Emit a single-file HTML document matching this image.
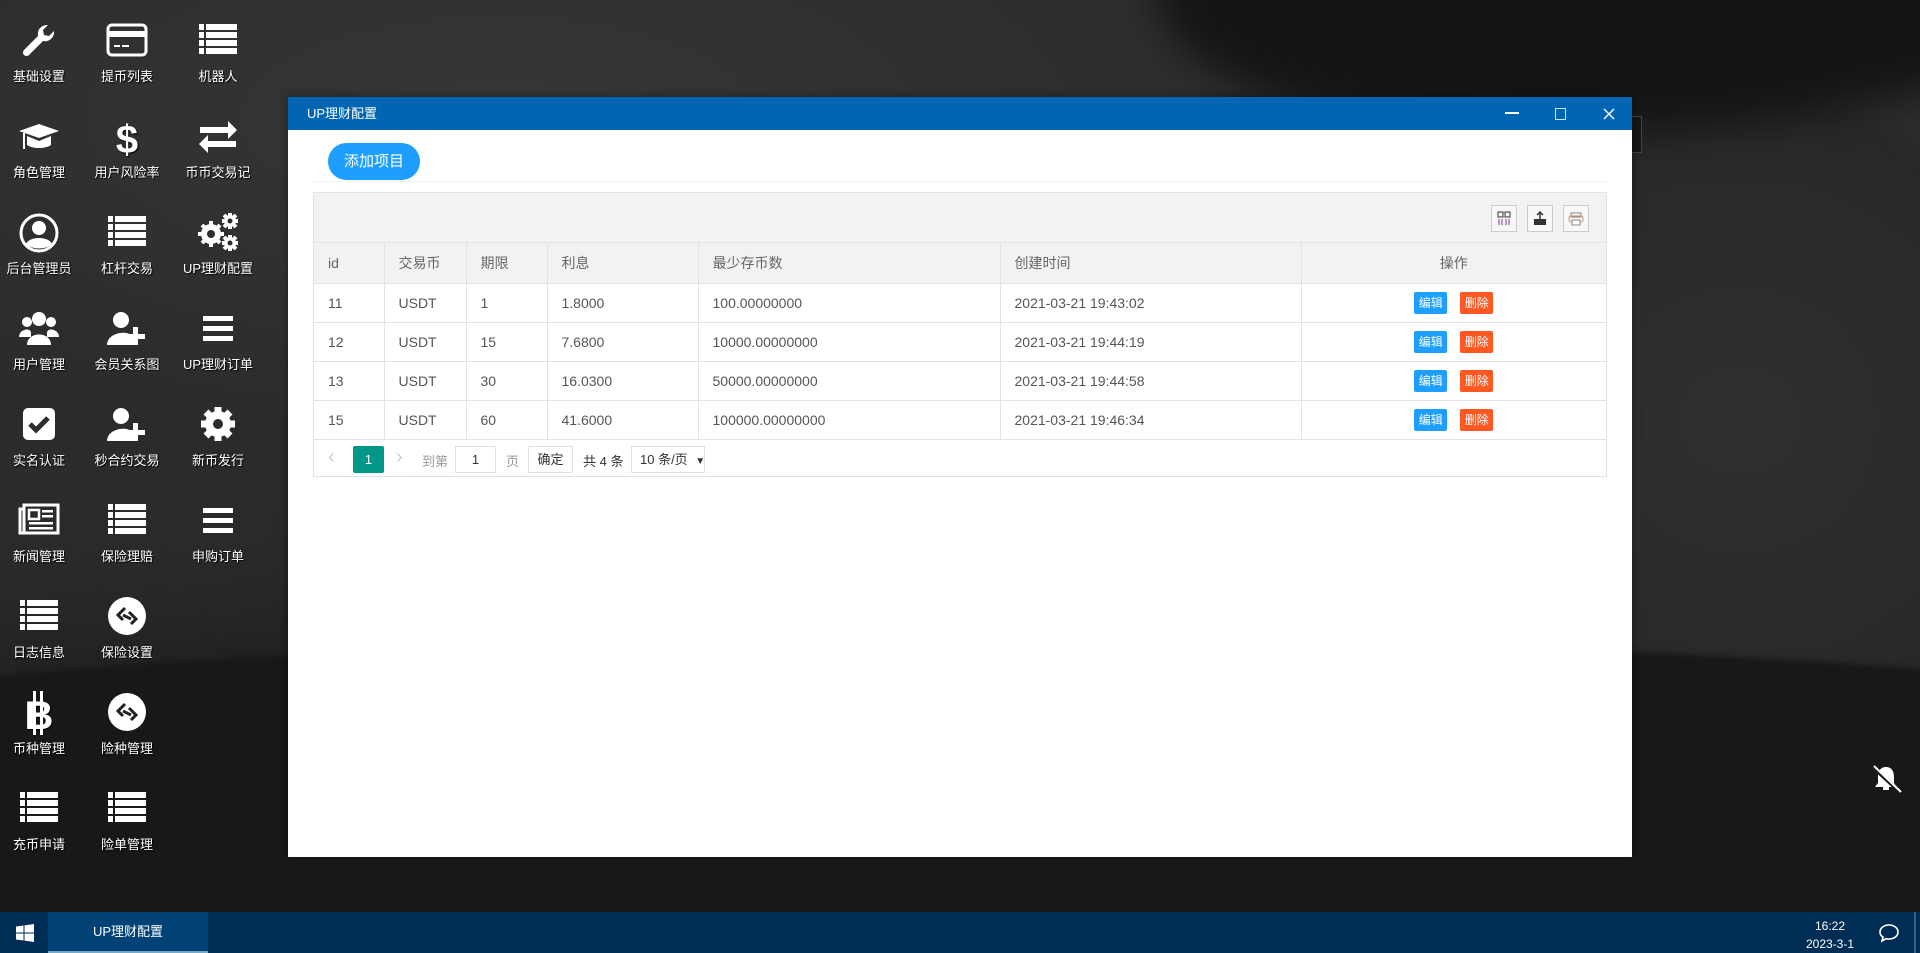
<!DOCTYPE html>
<html><head><meta charset="utf-8"><style>
*{margin:0;padding:0;box-sizing:border-box}
html,body{width:1920px;height:953px;overflow:hidden;background:#1a1a1a}
body{font-family:"Liberation Sans","Noto Sans CJK SC",sans-serif}
#root{position:absolute;left:0;top:0;width:1920px;height:953px;overflow:hidden;background:linear-gradient(170deg,#353535 0%,#2c2c2c 40%,#1c1c1c 60%,#1a1a1a 100%)}
.bg1{position:absolute;left:0;top:0;width:1920px;height:680px;background:radial-gradient(ellipse 1400px 560px at 500px 120px,#363636 0%,#2b2b2b 60%,rgba(30,30,30,0) 100%)}
.bg2{position:absolute;left:1150px;top:-300px;width:1200px;height:420px;border-radius:50%;background:#141414;transform:rotate(-8deg);filter:blur(20px)}
.bg3{position:absolute;left:1200px;top:60px;width:900px;height:900px;border-radius:50%;background:radial-gradient(circle at 60% 40%,#303030,#222 70%);filter:blur(10px)}
.bg4{position:absolute;left:-200px;top:640px;width:2400px;height:400px;background:#181818;border-radius:50% 50% 0 0/20% 20% 0 0;filter:blur(3px)}
.ic{position:absolute;width:90px;text-align:center;color:#fff;font-size:13px;text-shadow:1px 1px 1px #000}
.ic svg{display:block;margin:0 auto 3px;width:44px;height:44px}
.win{position:absolute;left:288px;top:97px;width:1344px;height:760px;background:#fff;box-shadow:0 0 8px rgba(0,0,0,.4)}
.tb{height:33px;background:#0066b3;color:#fff;font-size:13px;line-height:33px;padding-left:19px;position:relative}
.tb span{position:absolute;top:0;color:#fff}
.btn{position:absolute;left:40px;top:46px;width:92px;height:37px;border-radius:19px;background:#1e9fff;color:#fff;font-size:15px;line-height:37px;text-align:center}
.sep{position:absolute;left:25px;top:84px;width:1294px;height:1px;background:#f0f0f0}
.tbl{position:absolute;left:25px;top:95px;width:1294px;height:285px;border:1px solid #e2e2e2}
.tool{height:50px;background:#f2f2f2;border-bottom:1px solid #e2e2e2;position:relative}
.tool i{position:absolute;top:12px;width:26px;height:27px;border:1px solid #ccc;background:#f7f7f7}
table{border-collapse:collapse;width:1292px;font-size:14px;color:#555}
td,th{border:1px solid #e2e2e2;border-top:none;height:39px;text-align:left;padding-left:14px;font-weight:normal}
tr td:first-child,tr th:first-child{border-left:none}
tr td:last-child,tr th:last-child{border-right:none;text-align:center;padding-left:0}
th{background:#f2f2f2;height:40px;color:#666}
.e,.d{display:inline-block;width:33px;height:22px;line-height:22px;color:#fff;font-size:12px;border-radius:2px;text-align:center}
.e{background:#1e9fff;margin-right:13px}.d{background:#ff5722}
.pg{position:relative;height:39px;font-size:13px;color:#333}
.pg > span{position:absolute}
.task{position:absolute;left:0;top:912px;width:1920px;height:41px;background:#002d55}
</style></head><body><div id="root">
<div class="bg1"></div><div class="bg3"></div><div class="bg2"></div><div class="bg4"></div>
<div style="position:absolute;left:1632px;top:116px;width:10px;height:37px;border:1px solid #444;border-left:none;background:#151515"></div>

<div class="ic" style="left:-6px;top:19px"><svg viewBox="0 0 44 44"><path d="M30 6a9 9 0 0 0-9 11L7 31a3.5 3.5 0 0 0 5 5l14-14a9 9 0 0 0 11-10l-5 5-5-1-1-5 5-5z" fill="#fff"/></svg>基础设置</div>
<div class="ic" style="left:82px;top:19px"><svg viewBox="0 0 44 44"><rect x="3" y="6" width="38" height="30" rx="4" fill="none" stroke="#fff" stroke-width="3"/><rect x="3" y="12" width="38" height="6" fill="#fff"/><rect x="9" y="26" width="6" height="2" fill="#fff"/><rect x="17" y="26" width="7" height="2" fill="#fff"/></svg>提币列表</div>
<div class="ic" style="left:173px;top:19px"><svg viewBox="0 0 44 44" fill="#fff"><rect x="3" y="5" width="5" height="6"/><rect x="10" y="5" width="31" height="6"/><rect x="3" y="13" width="5" height="6"/><rect x="10" y="13" width="31" height="6"/><rect x="3" y="21" width="5" height="6"/><rect x="10" y="21" width="31" height="6"/><rect x="3" y="29" width="5" height="6"/><rect x="10" y="29" width="31" height="6"/></svg>机器人</div>

<div class="ic" style="left:-6px;top:115px"><svg viewBox="0 0 44 44" fill="#fff"><path d="M2 16 22 9l20 7-20 7z"/><path d="M10 21v9c6 4 18 4 24 0v-9l-12 5z"/><rect x="6" y="18" width="2" height="16"/></svg>角色管理</div>
<div class="ic" style="left:82px;top:115px"><svg viewBox="0 0 44 44"><text x="22" y="38" text-anchor="middle" font-size="40" font-weight="bold" fill="#fff" font-family="Liberation Sans">$</text></svg>用户风险率</div>
<div class="ic" style="left:173px;top:115px"><svg viewBox="0 0 44 44" fill="#fff"><path d="M4 12h28V6l9 9-9 9v-6H4z"/><path d="M40 26H12v-6l-9 9 9 9v-6h28z"/></svg>币币交易记</div>

<div class="ic" style="left:-6px;top:211px"><svg viewBox="0 0 44 44"><circle cx="22" cy="22" r="18" fill="none" stroke="#fff" stroke-width="3"/><circle cx="22" cy="17" r="7" fill="#fff"/><path d="M9 33c3-8 23-8 26 0-7 6-19 6-26 0z" fill="#fff"/></svg>后台管理员</div>
<div class="ic" style="left:82px;top:211px"><svg viewBox="0 0 44 44" fill="#fff"><rect x="3" y="5" width="5" height="6"/><rect x="10" y="5" width="31" height="6"/><rect x="3" y="13" width="5" height="6"/><rect x="10" y="13" width="31" height="6"/><rect x="3" y="21" width="5" height="6"/><rect x="10" y="21" width="31" height="6"/><rect x="3" y="29" width="5" height="6"/><rect x="10" y="29" width="31" height="6"/></svg>杠杆交易</div>
<div class="ic" style="left:173px;top:211px"><svg viewBox="0 0 44 44" fill="#fff"><g stroke="#fff" stroke-width="4"><path d="M15 10v26M2 23h26M6 14l18 18M24 14 6 32"/><path d="M34 2v16M26 10h16M28 4l12 12M40 4 28 16"/><path d="M34 24v16M26 32h16M28 26l12 12M40 26 28 38"/></g><circle cx="15" cy="23" r="10"/><circle cx="34" cy="10" r="6"/><circle cx="34" cy="32" r="6"/><circle cx="15" cy="23" r="4" fill="#2c2c2c"/><circle cx="34" cy="10" r="2.5" fill="#2c2c2c"/><circle cx="34" cy="32" r="2.5" fill="#2c2c2c"/></svg>UP理财配置</div>

<div class="ic" style="left:-6px;top:307px"><svg viewBox="0 0 44 44" fill="#fff"><circle cx="22" cy="12" r="7"/><circle cx="10" cy="15" r="5"/><circle cx="34" cy="15" r="5"/><path d="M10 38c0-14 24-14 24 0z"/><path d="M2 30c0-8 12-10 12-4v4z"/><path d="M42 30c0-8-12-10-12-4v4z"/></svg>用户管理</div>
<div class="ic" style="left:82px;top:307px"><svg viewBox="0 0 44 44" fill="#fff"><circle cx="16" cy="13" r="8"/><path d="M2 38c0-14 26-16 26-6v6z"/><rect x="28" y="20" width="5" height="18"/><rect x="21" y="27" width="19" height="5"/></svg>会员关系图</div>
<div class="ic" style="left:173px;top:307px"><svg viewBox="0 0 44 44" fill="#fff"><rect x="7" y="9" width="30" height="5"/><rect x="7" y="19" width="30" height="5"/><rect x="7" y="29" width="30" height="5"/></svg>UP理财订单</div>

<div class="ic" style="left:-6px;top:403px"><svg viewBox="0 0 44 44"><rect x="6" y="5" width="32" height="32" rx="5" fill="#fff"/><path d="M13 21l6 6 12-12" stroke="#2c2c2c" stroke-width="5" fill="none"/></svg>实名认证</div>
<div class="ic" style="left:82px;top:403px"><svg viewBox="0 0 44 44" fill="#fff"><circle cx="16" cy="13" r="8"/><path d="M2 38c0-14 26-16 26-6v6z"/><rect x="28" y="20" width="5" height="18"/><rect x="21" y="27" width="19" height="5"/></svg>秒合约交易</div>
<div class="ic" style="left:173px;top:403px"><svg viewBox="0 0 44 44" fill="#fff"><circle cx="22" cy="21" r="13"/><g stroke="#fff" stroke-width="7"><path d="M22 4v34M5 21h34M10 9l24 24M34 9 10 33"/></g><circle cx="22" cy="21" r="5" fill="#2c2c2c"/></svg>新币发行</div>

<div class="ic" style="left:-6px;top:499px"><svg viewBox="0 0 44 44"><rect x="7" y="6" width="34" height="28" fill="none" stroke="#fff" stroke-width="3"/><path d="M7 10H3v24h4" fill="none" stroke="#fff" stroke-width="3"/><rect x="12" y="11" width="10" height="9" fill="none" stroke="#fff" stroke-width="2.5"/><g fill="#fff"><rect x="25" y="11" width="11" height="2.5"/><rect x="25" y="16" width="11" height="2.5"/><rect x="12" y="23" width="24" height="2.5"/><rect x="12" y="28" width="24" height="2.5"/></g></svg>新闻管理</div>
<div class="ic" style="left:82px;top:499px"><svg viewBox="0 0 44 44" fill="#fff"><rect x="3" y="5" width="5" height="6"/><rect x="10" y="5" width="31" height="6"/><rect x="3" y="13" width="5" height="6"/><rect x="10" y="13" width="31" height="6"/><rect x="3" y="21" width="5" height="6"/><rect x="10" y="21" width="31" height="6"/><rect x="3" y="29" width="5" height="6"/><rect x="10" y="29" width="31" height="6"/></svg>保险理赔</div>
<div class="ic" style="left:173px;top:499px"><svg viewBox="0 0 44 44" fill="#fff"><rect x="7" y="9" width="30" height="5"/><rect x="7" y="19" width="30" height="5"/><rect x="7" y="29" width="30" height="5"/></svg>申购订单</div>

<div class="ic" style="left:-6px;top:595px"><svg viewBox="0 0 44 44" fill="#fff"><rect x="3" y="5" width="5" height="6"/><rect x="10" y="5" width="31" height="6"/><rect x="3" y="13" width="5" height="6"/><rect x="10" y="13" width="31" height="6"/><rect x="3" y="21" width="5" height="6"/><rect x="10" y="21" width="31" height="6"/><rect x="3" y="29" width="5" height="6"/><rect x="10" y="29" width="31" height="6"/></svg>日志信息</div>
<div class="ic" style="left:82px;top:595px"><svg viewBox="0 0 44 44"><circle cx="22" cy="21" r="19" fill="#fff"/><path d="M20 13l-7 7 5 5M24 17l7 7-5 5M18 20l8 4" stroke="#222" stroke-width="3" fill="none"/></svg>保险设置</div>

<div class="ic" style="left:-6px;top:691px"><svg viewBox="0 0 44 44"><text x="22" y="38" text-anchor="middle" font-size="40" font-weight="bold" fill="#fff" font-family="Liberation Sans">B</text><rect x="16" y="0" width="3" height="44" fill="#fff"/><rect x="23" y="0" width="3" height="44" fill="#fff"/></svg>币种管理</div>
<div class="ic" style="left:82px;top:691px"><svg viewBox="0 0 44 44"><circle cx="22" cy="21" r="19" fill="#fff"/><path d="M20 13l-7 7 5 5M24 17l7 7-5 5M18 20l8 4" stroke="#222" stroke-width="3" fill="none"/></svg>险种管理</div>

<div class="ic" style="left:-6px;top:787px"><svg viewBox="0 0 44 44" fill="#fff"><rect x="3" y="5" width="5" height="6"/><rect x="10" y="5" width="31" height="6"/><rect x="3" y="13" width="5" height="6"/><rect x="10" y="13" width="31" height="6"/><rect x="3" y="21" width="5" height="6"/><rect x="10" y="21" width="31" height="6"/><rect x="3" y="29" width="5" height="6"/><rect x="10" y="29" width="31" height="6"/></svg>充币申请</div>
<div class="ic" style="left:82px;top:787px"><svg viewBox="0 0 44 44" fill="#fff"><rect x="3" y="5" width="5" height="6"/><rect x="10" y="5" width="31" height="6"/><rect x="3" y="13" width="5" height="6"/><rect x="10" y="13" width="31" height="6"/><rect x="3" y="21" width="5" height="6"/><rect x="10" y="21" width="31" height="6"/><rect x="3" y="29" width="5" height="6"/><rect x="10" y="29" width="31" height="6"/></svg>险单管理</div>

<div class="win">
 <div class="tb">UP理财配置
  <span style="left:1217px;top:15px;width:14px;height:2px;background:#fff"></span>
  <span style="left:1267px;top:11px;width:11px;height:12px;border:1.5px solid #cfe6ff"></span>
  <svg style="position:absolute;left:1315px;top:11px" width="12" height="12"><path d="M1 1l10 10M11 1 1 11" stroke="#fff" stroke-width="1.4"/></svg>
 </div>
 <div class="btn">添加项目</div>
 <div class="sep"></div>
 <div class="tbl">
  <div class="tool">
   <i style="left:1177px"><svg width="24" height="25" viewBox="0 0 24 25"><rect x="6" y="6" width="5" height="5" fill="none" stroke="#333"/><rect x="13" y="6" width="5" height="5" fill="none" stroke="#333"/><path d="M7 13v6M10 13v6M14 13v6M17 13v6" stroke="#7a3a9a"/></svg></i>
   <i style="left:1213px"><svg width="24" height="25" viewBox="0 0 24 25"><rect x="6" y="13" width="12" height="6" fill="#333"/><path d="M12 14V6M9 9l3-3 3 3" stroke="#333" stroke-width="1.5" fill="none"/></svg></i>
   <i style="left:1249px"><svg width="24" height="25" viewBox="0 0 24 25"><rect x="7" y="7" width="10" height="4" fill="none" stroke="#888"/><rect x="5" y="10" width="14" height="6" rx="2" fill="none" stroke="#c96"/><rect x="8" y="14" width="8" height="5" fill="#fff" stroke="#888"/></svg></i>
  </div>
  <table>
   <colgroup><col style="width:70px"><col style="width:82px"><col style="width:81px"><col style="width:151px"><col style="width:302px"><col style="width:301px"><col></colgroup>
   <tr><th>id</th><th>交易币</th><th>期限</th><th>利息</th><th>最少存币数</th><th>创建时间</th><th>操作</th></tr>
   <tr><td>11</td><td>USDT</td><td>1</td><td>1.8000</td><td>100.00000000</td><td>2021-03-21 19:43:02</td><td><span class="e">编辑</span><span class="d">删除</span></td></tr>
   <tr><td>12</td><td>USDT</td><td>15</td><td>7.6800</td><td>10000.00000000</td><td>2021-03-21 19:44:19</td><td><span class="e">编辑</span><span class="d">删除</span></td></tr>
   <tr><td>13</td><td>USDT</td><td>30</td><td>16.0300</td><td>50000.00000000</td><td>2021-03-21 19:44:58</td><td><span class="e">编辑</span><span class="d">删除</span></td></tr>
   <tr><td>15</td><td>USDT</td><td>60</td><td>41.6000</td><td>100000.00000000</td><td>2021-03-21 19:46:34</td><td><span class="e">编辑</span><span class="d">删除</span></td></tr>
  </table>
  <div class="pg">
   <span style="left:14px;top:6px;color:#ccc;font-size:20px">‹</span>
   <span style="left:39px;top:6px;width:31px;height:27px;background:#009688;color:#fff;text-align:center;line-height:27px;border-radius:2px">1</span>
   <span style="left:82px;top:6px;color:#ccc;font-size:20px">›</span>
   <span style="left:108px;top:11px;color:#999">到第</span>
   <span style="left:141px;top:6px;width:41px;height:27px;border:1px solid #e2e2e2;text-align:center;line-height:25px">1</span>
   <span style="left:192px;top:11px;color:#999">页</span>
   <span style="left:214px;top:6px;width:45px;height:27px;border:1px solid #e2e2e2;text-align:center;line-height:25px">确定</span>
   <span style="left:269px;top:11px">共 4 条</span>
   <span style="left:317px;top:6px;width:74px;height:27px;border:1px solid #e2e2e2;line-height:25px;padding-left:8px;white-space:nowrap">10 条/页 <b style="font-size:10px;margin-left:4px">▼</b></span>
  </div>
 </div>
</div>

<svg style="position:absolute;left:1870px;top:763px" width="32" height="32" viewBox="0 0 32 32"><path d="M16 4c-6 0-8 5-8 10v6l-3 4h22l-3-4v-6c0-5-2-10-8-10z" fill="#fff"/><rect x="13" y="24" width="6" height="3" fill="#fff"/><path d="M3 4l27 25" stroke="#1c1c1c" stroke-width="4"/><path d="M4 3l27 26" stroke="#fff" stroke-width="2"/></svg>

<div class="task">
 <svg style="position:absolute;left:16px;top:12px" width="18" height="18" viewBox="0 0 18 18" fill="#fff"><path d="M0 2.5 7.5 1.5v7H0zM8.5 1.4 18 0v8.5H8.5zM0 9.5h7.5v7L0 15.5zM8.5 9.5H18V18l-9.5-1.4z"/></svg>
 <div style="position:absolute;left:48px;top:0;width:160px;height:41px;background:#004275;border-bottom:2px solid #7aa6c8;color:#fff;font-size:13px;text-align:center;line-height:40px">UP理财配置</div>
 <div style="position:absolute;left:1790px;top:5px;width:80px;text-align:center;color:#fff;font-size:12px;line-height:18px">16:22<br>2023-3-1</div>
 <svg style="position:absolute;left:1878px;top:10px" width="22" height="22" viewBox="0 0 22 22"><path d="M11 3c5 0 9 3 9 7s-4 7-9 7c-1 0-2 0-3-.3L4 19l1-4C3 14 2 12 2 10c0-4 4-7 9-7z" fill="none" stroke="#fff" stroke-width="1.6"/></svg>
 <div style="position:absolute;left:1914px;top:0;width:2px;height:41px;background:#3a5d80"></div>
</div>
</div></body></html>
